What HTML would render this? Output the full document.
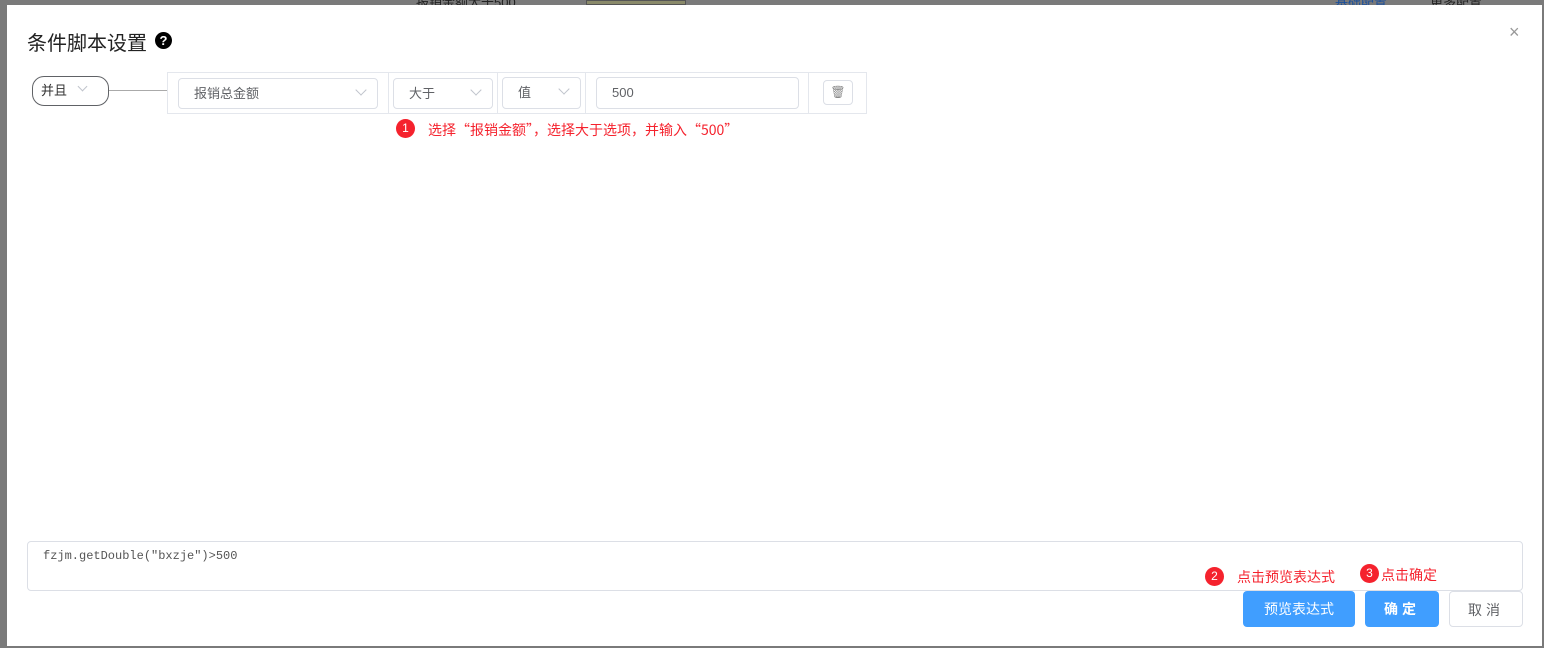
<!DOCTYPE html>
<html><head><meta charset="utf-8"><style>
*{box-sizing:border-box;margin:0;padding:0}
body{width:1544px;height:648px;background:#7a7a7a;position:relative;overflow:hidden;font-family:"Liberation Sans","Noto Sans CJK SC",sans-serif}
.abs{position:absolute}
.modal{left:7px;top:5px;width:1535px;height:641px;background:#fff}
.sel{position:absolute;border:1px solid #dcdfe6;border-radius:4px;background:#fff;font-size:13px;color:#606266;height:31px;line-height:29px}
.chev{position:absolute;right:12px;top:7px;width:8px;height:8px;border-right:1px solid #c0c4cc;border-bottom:1px solid #c0c4cc;transform:rotate(45deg)}
.red{color:#f5222d;font-size:14px}
.cjk{font-family:"Noto Sans CJK SC",sans-serif}
.dot{position:absolute;width:19px;height:19px;border-radius:50%;background:#f5222d;color:#fff;font-size:12px;text-align:center;line-height:19px}
.btn{position:absolute;height:36px;border-radius:4px;font-size:14px;text-align:center;line-height:36px}
</style></head><body>
<div class="abs" style="left:416px;top:-8px;font-size:13px;color:#222">报销金额大于500</div>
<div class="abs" style="left:586px;top:0;width:100px;height:5px;background:#8a8a6a;border:1px solid #555"></div>
<div class="abs" style="left:1335px;top:-8px;font-size:13px;color:#1a4f9c">基础配置</div>
<div class="abs" style="left:1430px;top:-8px;font-size:13px;color:#222">更多配置</div>
<div class="abs modal"></div>
<div class="abs" style="left:27px;top:27px;font-size:20px;color:#222">条件脚本设置</div>
<div class="abs" style="left:155px;top:32px;width:17px;height:17px;border-radius:50%;background:#000;color:#fff;font-size:13px;font-weight:bold;text-align:center;line-height:17px">?</div>
<div class="abs" style="left:1509px;top:22px;color:#999;font-size:18px;line-height:20px">×</div>
<div class="abs" style="left:32px;top:76px;width:77px;height:30px;border:1px solid #606266;border-radius:12px;font-size:13px;color:#333;line-height:28px;padding-left:8px">并且<span style="position:absolute;left:46px;top:6px;width:7px;height:7px;border-right:1px solid #c0c4cc;border-bottom:1px solid #c0c4cc;transform:rotate(45deg)"></span></div>
<div class="abs" style="left:109px;top:90px;width:58px;height:1px;background:#aaa"></div>
<div class="abs" style="left:167px;top:72px;width:700px;height:42px;border:1px solid #e4e7ed"></div>
<div class="abs" style="left:388px;top:72px;width:1px;height:42px;background:#e4e7ed"></div>
<div class="abs" style="left:497px;top:72px;width:1px;height:42px;background:#e4e7ed"></div>
<div class="abs" style="left:585px;top:72px;width:1px;height:42px;background:#e4e7ed"></div>
<div class="abs" style="left:808px;top:72px;width:1px;height:42px;background:#e4e7ed"></div>
<div class="sel" style="left:178px;top:78px;width:200px;padding-left:15px">报销总金额<span class="chev"></span></div>
<div class="sel" style="left:393px;top:78px;width:100px;padding-left:15px">大于<span class="chev"></span></div>
<div class="sel" style="left:502px;top:77px;width:79px;height:32px;padding-left:15px">值<span class="chev"></span></div>
<div class="sel" style="left:596px;top:77px;width:203px;height:32px;padding-left:15px">500</div>
<div class="sel" style="left:823px;top:80px;width:30px;height:25px;line-height:23px;text-align:center;font-size:12px;color:#888">🗑</div>
<div class="dot" style="left:396px;top:119px">1</div>
<div class="abs red cjk" style="left:428px;top:120px">选择“报销金额”，选择大于选项，并输入“500”</div>
<div class="abs" style="left:27px;top:541px;width:1496px;height:50px;border:1px solid #dcdfe6;border-radius:4px"></div>
<div class="abs" style="left:43px;top:549px;font-family:'Liberation Mono',monospace;font-size:12px;color:#555">fzjm.getDouble("bxzje")&gt;500</div>
<div class="dot" style="left:1205px;top:567px">2</div>
<div class="abs red" style="left:1237px;top:567px">点击预览表达式</div>
<div class="dot" style="left:1360px;top:564px">3</div>
<div class="abs red" style="left:1381px;top:565px">点击确定</div>
<div class="btn" style="left:1243px;top:591px;width:112px;background:#409eff;color:#fff">预览表达式</div>
<div class="btn" style="left:1365px;top:591px;width:74px;background:#409eff;color:#fff;letter-spacing:4px;font-weight:bold">确定</div>
<div class="btn" style="left:1449px;top:591px;width:74px;border:1px solid #dcdfe6;color:#606266;letter-spacing:4px">取消</div>
</body></html>
